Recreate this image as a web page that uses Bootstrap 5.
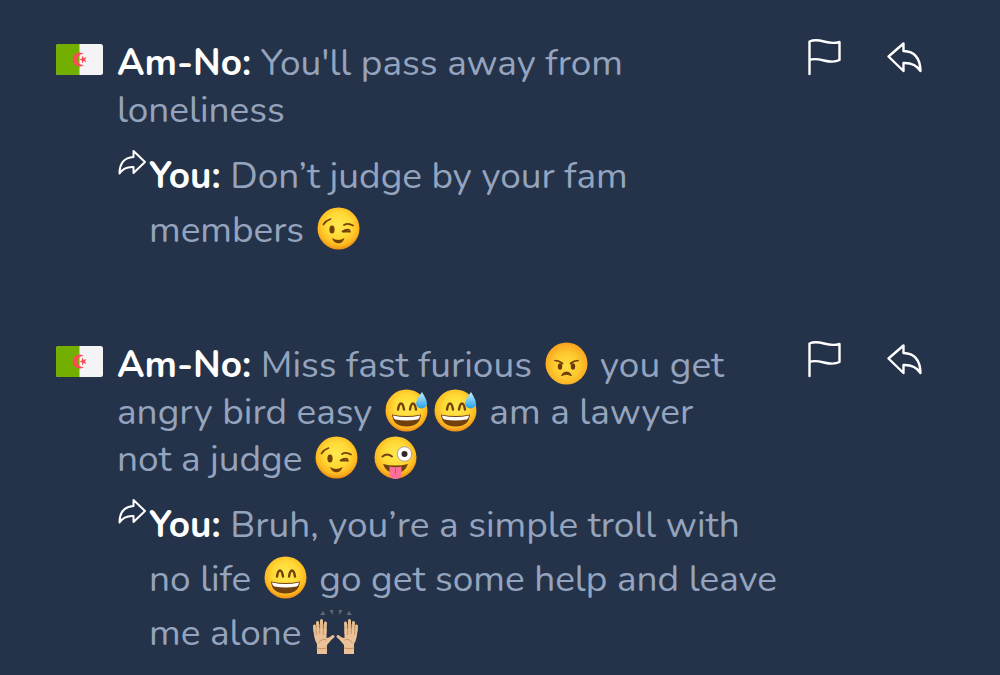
<!DOCTYPE html>
<html lang="en">
<head>
<meta charset="utf-8">
<meta name="viewport" content="width=device-width, initial-scale=1">
<title>Comments</title>
<link href="https://cdn.jsdelivr.net/npm/bootstrap@5.3.0/dist/css/bootstrap.min.css" rel="stylesheet">
<style>
  body { background: #243349; color: #95a4be; font-family: Nunito, Lato, sans-serif; font-size: 37px; overflow-x: hidden; }
  .thread { padding: 0 77px 0 56px; }
  .earlier { height: 3px; padding-left: 99px; line-height: 48px; }
  .earlier p { margin-top: -43px; }
  .comment-item { padding-top: 36px; }
  .comment-item + .comment-item { margin-top: 48px; }
  .country { width: 47px; height: 31px; margin-top: 5px; margin-right: 14px; }
  .message { line-height: 47px; padding-top: 1px; }
  .reply-row { margin-top: 15px; }
  .reply-text { line-height: 54px; }
  .author { color: #fff; font-weight: 700; }
  .reply-mark { width: 32px; height: 28px; }
  .actions { gap: 44px; }
  .actions .btn { line-height: 1; color: #fff; }
  .emoji { width: 43px; height: 43px; margin: 0 3px; vertical-align: -8px; }
  .hands { width: 48px; height: 46px; margin: 0 1px; vertical-align: -10px; }
</style>
</head>
<body>
<svg class="position-absolute" width="0" height="0" aria-hidden="true">
  <defs>
    <radialGradient id="skin" cx="50%" cy="42%" r="60%">
      <stop offset="0" stop-color="#ffe850"/><stop offset=".5" stop-color="#ffd935"/><stop offset=".8" stop-color="#fdb820"/><stop offset="1" stop-color="#e98414"/>
    </radialGradient>
    <radialGradient id="cross" cx="50%" cy="55%" r="60%">
      <stop offset="0" stop-color="#ffdf40"/><stop offset=".5" stop-color="#fdc92f"/><stop offset=".85" stop-color="#f9a922"/><stop offset="1" stop-color="#ee8a1a"/>
    </radialGradient>
    <linearGradient id="drop" x1="0" y1="0" x2="0" y2="1">
      <stop offset="0" stop-color="#c5efff"/><stop offset="1" stop-color="#22a2ea"/>
    </linearGradient>
    <symbol id="wink" viewBox="0 0 43 43">
      <circle cx="21.500" cy="21.500" r="21" fill="url(#skin)"/>
      <g fill="none" stroke="#72410b" stroke-width="1.700" stroke-linecap="round">
        <path d="M6.500 17.500Q9 13.500 13.500 12"/><path d="M27 18Q31 15.500 36 18.500"/><path d="M25.500 24.500Q29 22 32.500 23M26 24.700H33"/>
      </g>
      <ellipse cx="15" cy="22.500" rx="2.600" ry="4" fill="#72410b"/>
      <path d="M15 31Q21 35 27.500 31Q26 36.500 21 36.300Q16.500 36 15 31Z" fill="#72410b"/>
    </symbol>
    <symbol id="angry" viewBox="0 0 43 43">
      <circle cx="21.500" cy="21.500" r="21" fill="url(#cross)"/>
      <path d="M10 18.500Q14 18.500 17.500 21.500M33 18.500Q29 18.500 25.500 21.500" fill="none" stroke="#6d3b0a" stroke-width="1.700" stroke-linecap="round"/>
      <ellipse cx="15" cy="24.500" rx="2.200" ry="3.200" fill="#6d3b0a"/><ellipse cx="28" cy="24.500" rx="2.200" ry="3.200" fill="#6d3b0a"/>
      <path d="M16.500 33.500Q18 30 21.500 30T26.500 33.500Q21.500 31 16.500 33.500Z" fill="#6d3b0a" stroke="#6d3b0a"/>
    </symbol>
    <symbol id="grin" viewBox="0 0 43 43">
      <circle cx="21.500" cy="21.500" r="21" fill="url(#skin)"/>
      <path d="M13 20.500Q14 14.500 16 14.500T19 20.500M25 20.500Q26 14.500 28 14.500T31 20.500" fill="none" stroke="#72410b" stroke-width="2.400" stroke-linecap="round"/>
      <path d="M7 25.500Q21.500 28.500 36 25.500Q35 37.500 21.500 37.500T7 25.500Z" fill="#70400e"/>
      <path d="M8 26.500Q21.500 29.500 35 26.500Q34.500 30 32.500 30.500Q21.500 32.500 10.500 30.500Q8.500 30 8 26.500Z" fill="#fff"/>
    </symbol>
    <symbol id="sweat" viewBox="0 0 43 43">
      <use href="#grin"/>
      <path d="M37 3Q31 11 31 14.500A5.500 5 0 0 0 42 14.500Q42 11 37 3Z" fill="url(#drop)"/>
    </symbol>
    <symbol id="tongue" viewBox="0 0 43 43">
      <circle cx="21.500" cy="21.500" r="21" fill="url(#skin)"/>
      <path d="M8.500 20.500Q13 16.500 18 20.500" fill="none" stroke="#72410b" stroke-width="2" stroke-linecap="round"/>
      <path d="M9 28Q21.500 31 34 28Q31 37 21.500 37T9 28Z" fill="#70400e"/>
      <path d="M15.500 30.500Q21.500 32 27.500 30.500V37Q27 43 21.500 43T15.500 37Z" fill="#fb6f99"/>
      <path d="M21.500 32V38" stroke="#d94878"/>
      <circle cx="30.500" cy="18" r="7.300" fill="#fff" stroke="#aaa08e"/><circle cx="30.500" cy="18" r="3" fill="#302a26"/>
    </symbol>
    <symbol id="hands" viewBox="0 0 48 46">
      <g fill="#606873"><path d="M8 6l3-4 2.500 4zM17.500 1h4l-1 5zM26.500 1h4l-3 5zM34.500 6L37 2l3 4z"/></g>
      <g id="palm">
        <path d="M3 22L2.500 17M6 24L5.500 13.500M9.500 24V11.500M13 24L13.500 14M14 33L21 27.500" fill="none" stroke="#e6bc90" stroke-width="3" stroke-linecap="round"/>
        <path d="M1.500 18Q1.500 30 5 35V45H15V36Q19 32 20.500 28L14.500 29V20Z" fill="#ebc298"/>
        <path d="M4.200 17V26M7.700 15V25M11.300 15V26M6.500 34Q10 29 14.500 31M4.500 39Q10 40.500 15 39" fill="none" stroke="#b98658" stroke-width=".800"/>
      </g>
      <use href="#palm" transform="matrix(-1 0 0 1 47 0)"/>
    </symbol>
    <symbol id="algeria" viewBox="0 0 47 31">
      <rect width="47" height="31" rx="2.500" fill="#f4f4f6"/>
      <path d="M2.500 0H23.500V31H2.500Q0 31 0 28.500V2.500Q0 0 2.500 0Z" fill="#73af00"/>
      <path d="M28 10A7 7 0 1 0 28 21A5.600 5.600 0 1 1 28 10Z" fill="#ff4b55"/>
      <path d="M23 15.500L26 14.600V11.600L27.800 14L30.500 13L29 15.500L30.500 18L27.800 17L26 19.400V16.400Z" fill="#ff4b55"/>
    </symbol>
    <symbol id="report" viewBox="0 0 35 38">
      <path d="M1.500 35V2.500Q7 0 16 2.500T31.500 3V21Q26 24 16 21.500T1.500 21" fill="none" stroke="currentColor" stroke-width="2.400" stroke-linejoin="round" stroke-linecap="round"/>
    </symbol>
    <symbol id="reply" viewBox="0 0 36 32">
      <path d="M1.500 14.500L16.500 1.500V9Q33 9.500 33.500 29Q28 20.500 16.500 21V29Z" fill="none" stroke="currentColor" stroke-width="2.400" stroke-linejoin="round"/>
    </symbol>
    <symbol id="answered" viewBox="0 0 32 28">
      <path d="M2.500 24.500Q2.500 9 16.500 8V2L28 13L16.500 24V18Q7 17.500 2.500 24.500Z" fill="none" stroke="#fff" stroke-width="2" stroke-linejoin="round"/>
    </symbol>
  </defs>
</svg>

<main class="thread">
  <div class="earlier overflow-hidden"><p class="mb-0">y</p></div>

  <article class="comment-item d-flex align-items-start">
    <svg class="country flex-shrink-0" role="img" aria-label="Algeria"><use href="#algeria"/></svg>
    <div class="flex-grow-1">
      <p class="message mb-0"><span class="author">Am-No:</span> You'll pass away from<br>loneliness</p>
      <div class="reply-row d-flex">
        <svg class="reply-mark flex-shrink-0" aria-hidden="true"><use href="#answered"/></svg>
        <p class="reply-text mb-0"><span class="author">You:</span> Don’t judge by your fam<br>members <svg class="emoji" role="img" aria-label="winking face"><use href="#wink"/></svg></p>
      </div>
    </div>
    <div class="actions d-flex flex-shrink-0">
      <button type="button" class="btn border-0 p-0" aria-label="Report"><svg width="35" height="38"><use href="#report"/></svg></button>
      <button type="button" class="btn border-0 p-0" aria-label="Reply"><svg width="36" height="32"><use href="#reply"/></svg></button>
    </div>
  </article>

  <article class="comment-item d-flex align-items-start">
    <svg class="country flex-shrink-0" role="img" aria-label="Algeria"><use href="#algeria"/></svg>
    <div class="flex-grow-1">
      <p class="message mb-0"><span class="author">Am-No:</span> Miss fast furious <svg class="emoji" role="img" aria-label="angry face"><use href="#angry"/></svg> you get<br>angry bird easy <svg class="emoji" role="img" aria-label="grinning face with sweat"><use href="#sweat"/></svg><svg class="emoji" role="img" aria-label="grinning face with sweat"><use href="#sweat"/></svg> am a lawyer<br>not a judge <svg class="emoji" role="img" aria-label="winking face"><use href="#wink"/></svg> <svg class="emoji" role="img" aria-label="winking face with tongue"><use href="#tongue"/></svg></p>
      <div class="reply-row d-flex">
        <svg class="reply-mark flex-shrink-0" aria-hidden="true"><use href="#answered"/></svg>
        <p class="reply-text mb-0"><span class="author">You:</span> Bruh, you’re a simple troll with<br>no life <svg class="emoji" role="img" aria-label="grinning face"><use href="#grin"/></svg> go get some help and leave<br>me alone <svg class="hands" role="img" aria-label="raised hands"><use href="#hands"/></svg></p>
      </div>
    </div>
    <div class="actions d-flex flex-shrink-0">
      <button type="button" class="btn border-0 p-0" aria-label="Report"><svg width="35" height="38"><use href="#report"/></svg></button>
      <button type="button" class="btn border-0 p-0" aria-label="Reply"><svg width="36" height="32"><use href="#reply"/></svg></button>
    </div>
  </article>
</main>
<script src="https://cdn.jsdelivr.net/npm/bootstrap@5.3.0/dist/js/bootstrap.bundle.min.js"></script>
</body>
</html>
